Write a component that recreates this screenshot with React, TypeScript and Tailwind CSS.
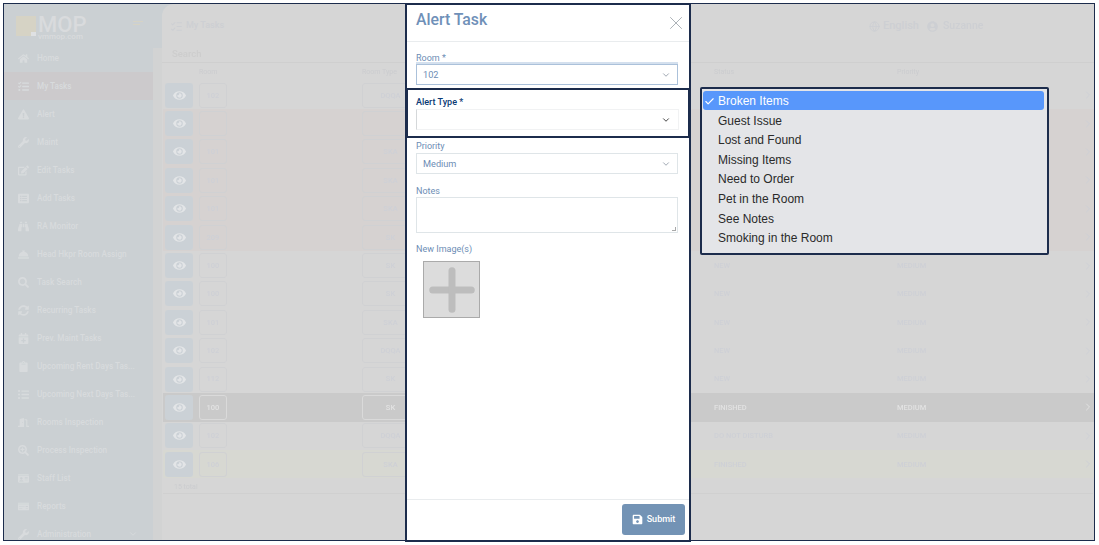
import { Check, ChevronDown, ChevronRight, Globe, ListChecks, Plus, X } from "lucide-react";
import {
  FaBinoculars,
  FaCalendarPlus,
  FaClipboard,
  FaConciergeBell,
  FaDoorOpen,
  FaEdit,
  FaExclamationTriangle,
  FaEye,
  FaHome,
  FaIdCard,
  FaListAlt,
  FaListUl,
  FaMoneyCheck,
  FaSave,
  FaSearch,
  FaSearchPlus,
  FaSyncAlt,
  FaTasks,
  FaUserCircle,
  FaWrench,
} from "react-icons/fa";

const navItems = [
  { label: "Home", icon: FaHome },
  { label: "My Tasks", icon: FaTasks, active: true },
  { label: "Alert", icon: FaExclamationTriangle },
  { label: "Maint", icon: FaWrench },
  { label: "Edit Tasks", icon: FaEdit },
  { label: "Add Tasks", icon: FaListAlt },
  { label: "RA Monitor", icon: FaBinoculars },
  { label: "Head Hkpr Room Assign", icon: FaConciergeBell },
  { label: "Task Search", icon: FaSearch },
  { label: "Recurring Tasks", icon: FaSyncAlt },
  { label: "Prev. Maint Tasks", icon: FaCalendarPlus },
  { label: "Upcoming Rent Days Tas...", icon: FaClipboard },
  { label: "Upcoming Next Days Tas...", icon: FaListUl },
  { label: "Rooms Inspection", icon: FaDoorOpen },
  { label: "Process Inspection", icon: FaSearchPlus },
  { label: "Staff List", icon: FaIdCard },
  { label: "Reports", icon: FaMoneyCheck },
  { label: "Administration", icon: FaWrench, hasChildren: true },
];

type Row = { room: string; type: string; status: string; tone?: "alert" | "selected" | "done" };

const rows: Row[] = [
  { room: "102", type: "DQQA", status: "NEW" },
  { room: "", type: "", status: "NEW", tone: "alert" },
  { room: "101", type: "SKA", status: "NEW", tone: "alert" },
  { room: "101", type: "SKA", status: "NEW", tone: "alert" },
  { room: "101", type: "SKA", status: "NEW", tone: "alert" },
  { room: "209", type: "SK", status: "NEW", tone: "alert" },
  { room: "100", type: "SK", status: "NEW" },
  { room: "100", type: "SK", status: "NEW" },
  { room: "101", type: "SKA", status: "NEW" },
  { room: "102", type: "DQQA", status: "NEW" },
  { room: "112", type: "SK", status: "NEW" },
  { room: "100", type: "SK", status: "FINISHED", tone: "selected" },
  { room: "102", type: "DQQA", status: "DO NOT DISTURB" },
  { room: "106", type: "SKA", status: "FINISHED", tone: "done" },
];

const alertTypes = [
  "Broken Items",
  "Guest Issue",
  "Lost and Found",
  "Missing Items",
  "Need to Order",
  "Pet in the Room",
  "See Notes",
  "Smoking in the Room",
];

const gridCols = "grid grid-cols-[36px_163px_352px_183px_1fr_12px] items-center";

function Sidebar() {
  return (
    <aside className="flex w-[158px] shrink-0 flex-col bg-[#cbd0d3]">
      <div className="flex h-[40px] shrink-0 items-center pl-[12px] pr-[19px] pt-[4px]">
        <div className="relative h-[20px] w-[20px] bg-[#d6d3c5]">
          <span className="absolute bottom-0 right-0 h-[4px] w-[5px] bg-[#dfe1e3]" />
        </div>
        <div className="ml-[2px] mt-[2px] flex flex-col text-[#d9dbdd]">
          <span className="text-[22px] font-medium leading-[18px]">MOP</span>
          <span className="text-[8px] font-medium leading-[5px]">vmmop.com</span>
        </div>
        <div className="-mt-[6px] ml-auto flex w-[10px] flex-col gap-[2px]">
          <span className="h-px bg-[#d6d3c5]" />
          <span className="h-px w-[7px] bg-[#d6d3c5]" />
        </div>
      </div>
      <div className="flex flex-1 overflow-hidden">
        <nav className="w-[149px] shrink-0">
          {navItems.map((item) => {
            const Icon = item.icon;
            return (
              <div
                key={item.label}
                className={`flex h-[28px] items-center pl-[14px] text-[#d8dbdd] ${item.active ? "bg-[#cccacc]" : ""}`}
              >
                <span className="flex w-[19px] shrink-0 justify-start">
                  <Icon size={11} />
                </span>
                <span className="whitespace-nowrap text-[8.2px] font-medium">{item.label}</span>
                {item.hasChildren ? <ChevronDown size={10} className="ml-auto mr-[15px]" /> : null}
              </div>
            );
          })}
        </nav>
        <div className="mt-[4px] w-[9px] bg-[#d2d3d3]" />
      </div>
    </aside>
  );
}

function TaskRow({ row }: { row: Row }) {
  const selected = row.tone === "selected";
  const toneClass = selected
    ? "bg-[#cacaca] text-[#e2e2e2]"
    : row.tone === "alert"
      ? "bg-[#d6d2d1] text-[#ced0d6]"
      : row.tone === "done"
        ? "bg-[#d7d8d2] text-[#ced0d6]"
        : "text-[#ced0d6]";
  const cellBorder = selected ? "border-[#dadada]" : "border-[#d0d1d3]";

  return (
    <div className={`${gridCols} h-[28.4px] text-[7.5px] font-medium ${toneClass}`}>
      <div className="pl-[2px]">
        <div className="flex h-[25px] w-[28px] items-center justify-center rounded-[3px] bg-[#cbd1d6] text-[#e3e5e7]">
          <FaEye size={13} />
        </div>
      </div>
      <div>
        <div className={`flex h-[25px] w-[28px] items-center justify-center rounded-[3px] border ${cellBorder}`}>
          {row.room}
        </div>
      </div>
      <div>
        <div className={`flex h-[25px] w-[57px] items-center justify-center rounded-[3px] border ${cellBorder}`}>
          {row.type}
        </div>
      </div>
      <span>{row.status}</span>
      <span>MEDIUM</span>
      <ChevronRight size={12} />
    </div>
  );
}

function Background() {
  return (
    <div className="flex h-full overflow-hidden border border-[#1c2c4c] bg-[#cbd0d3]">
      <div className="flex h-full w-full blur-[0.4px]">
        <Sidebar />
        <main className="flex min-w-0 flex-1 flex-col rounded-tl-xl bg-[#d6d6d6] pb-[8px]">
          <header className="flex h-[44px] shrink-0 items-center pl-[8px] text-[#cdcfd3]">
            <ListChecks size={13} />
            <span className="ml-[3px] text-[9px] font-medium">My Tasks</span>
            <div className="ml-[645px] flex items-center text-[11px] font-medium">
              <Globe size={11} />
              <span className="ml-[3px]">English</span>
              <FaUserCircle size={11} className="ml-[8px]" />
              <span className="ml-[5px] text-[10.5px]">Suzanne</span>
            </div>
          </header>
          <div className="flex h-[15px] shrink-0 items-center border-b border-[#cfcfcf] pb-px pl-[10px] text-[9.5px] font-medium text-[#cdcdcd]">
            Search
          </div>
          <div className="pl-px">
            <div className={`${gridCols} h-[18px] pt-px text-[7px] text-[#cbcccf]`}>
              <span />
              <span>Room</span>
              <span>Room Type</span>
              <span>Status</span>
              <span>Priority</span>
              <span />
            </div>
            {rows.map((row, index) => (
              <TaskRow key={index} row={row} />
            ))}
          </div>
          <div className="mx-px mt-[2px] flex flex-1 items-start border-b border-[#d0d0d0] pl-[11px] pt-[2px] text-[7px] text-[#cbcccf]">
            15 total
          </div>
          <div className="h-[44px] shrink-0" />
        </main>
      </div>
    </div>
  );
}

function SelectBox({ value, focused }: { value: string; focused?: boolean }) {
  return (
    <div
      className={`flex h-[21px] w-[262px] items-center justify-between border pl-[6px] pr-[6px] text-[9.2px] text-[#6d8db5] ${
        focused ? "border-[#abc1da] shadow-[0_-2px_0_#d4e0ee]" : "border-[#dfe5e8]"
      }`}
    >
      <span>{value}</span>
      <ChevronDown size={10} className="text-[#8e98a3]" />
    </div>
  );
}

function AlertModal() {
  return (
    <div className="absolute left-[405px] top-[3px] flex h-[539px] w-[286px] flex-col border-2 border-[#1c2c4c] bg-white font-['Roboto',sans-serif]">
      <div className="flex h-[37px] shrink-0 items-start justify-between border-b border-[#e9ecee] pl-[9px] pr-[2.5px] pt-[4px]">
        <h1 className="text-[15.8px] font-medium leading-[22px] text-[#6f90b8]">Alert Task</h1>
        <X size={22} strokeWidth={0.9} className="mt-[2.5px] text-[#9aa1a8]" />
      </div>
      <div className="flex flex-1 flex-col pl-[9px]">
        <label className="mt-[9px] h-[13px] text-[9px] leading-[14px] text-[#6d8db5]">Room *</label>
        <SelectBox value="102" focused />
        <div className="-ml-[10px] -mr-px mt-[3px] flex h-[50px] flex-col border-2 border-[#1c2c4c] pl-[8px] pt-[5px]">
          <label className="h-[14px] text-[9px] font-medium leading-[15px] text-[#0b3a74]">Alert Type *</label>
          <div className="flex h-[21px] w-[263px] items-center justify-end border border-[#f1f2f3] border-l-[#d5d8da] pr-[7px]">
            <ChevronDown size={10} className="text-[#222]" />
          </div>
        </div>
        <label className="mt-[2px] h-[13px] text-[9px] leading-[13px] text-[#6d8db5]">Priority</label>
        <SelectBox value="Medium" />
        <label className="mt-[10px] h-[13px] text-[9px] leading-[14px] text-[#6d8db5]">Notes</label>
        <div className="relative h-[36px] w-[262px] border border-[#dfe5e8]">
          <span className="absolute bottom-px right-px h-[4px] w-[4px] border-b border-r border-[#a9a9a9]" />
        </div>
        <label className="mt-[9px] h-[13px] text-[9px] leading-[14px] text-[#6d8db5]">New Image(s)</label>
        <div className="ml-[7px] mt-[6px] flex h-[57px] w-[57px] items-center justify-center overflow-hidden border border-[#aaaaaa] bg-[#dcdcdc]">
          <Plus size={66} strokeWidth={2.55} className="shrink-0 text-[#bdbdbd]" />
        </div>
      </div>
      <div className="flex h-[41px] shrink-0 items-start justify-end border-t border-[#e9ecee] pr-[4px] pt-[4px]">
        <button className="flex h-[31px] w-[63px] items-center justify-center gap-[4px] rounded-[3px] bg-[#7393b5] text-[9px] font-medium text-white">
          <FaSave size={11} />
          Submit
        </button>
      </div>
    </div>
  );
}

function AlertTypeMenu() {
  return (
    <div className="absolute left-[700px] top-[87px] flex h-[168px] w-[349px] flex-col rounded-[2px] border-2 border-[#1c2c4c] bg-[#e4e5e8] pl-px pr-[3px] pt-[1.7px] font-['Liberation_Sans',sans-serif] text-[12px] text-[#2a2a2a]">
      {alertTypes.map((type, index) => (
        <div
          key={type}
          className={`flex h-[19.6px] items-center pl-[15px] pt-px ${index === 0 ? "relative rounded-[3px] bg-[#5897fb] text-white" : ""}`}
        >
          {index === 0 ? <Check size={11} strokeWidth={2.5} className="absolute left-px top-[5px]" /> : null}
          {type}
        </div>
      ))}
    </div>
  );
}

export default function App() {
  return (
    <div className="relative h-[545px] w-full overflow-hidden bg-white pb-[4px] pl-[3px] pr-[4px] pt-[3px] font-['Roboto',sans-serif]">
      <Background />
      <AlertModal />
      <AlertTypeMenu />
    </div>
  );
}
